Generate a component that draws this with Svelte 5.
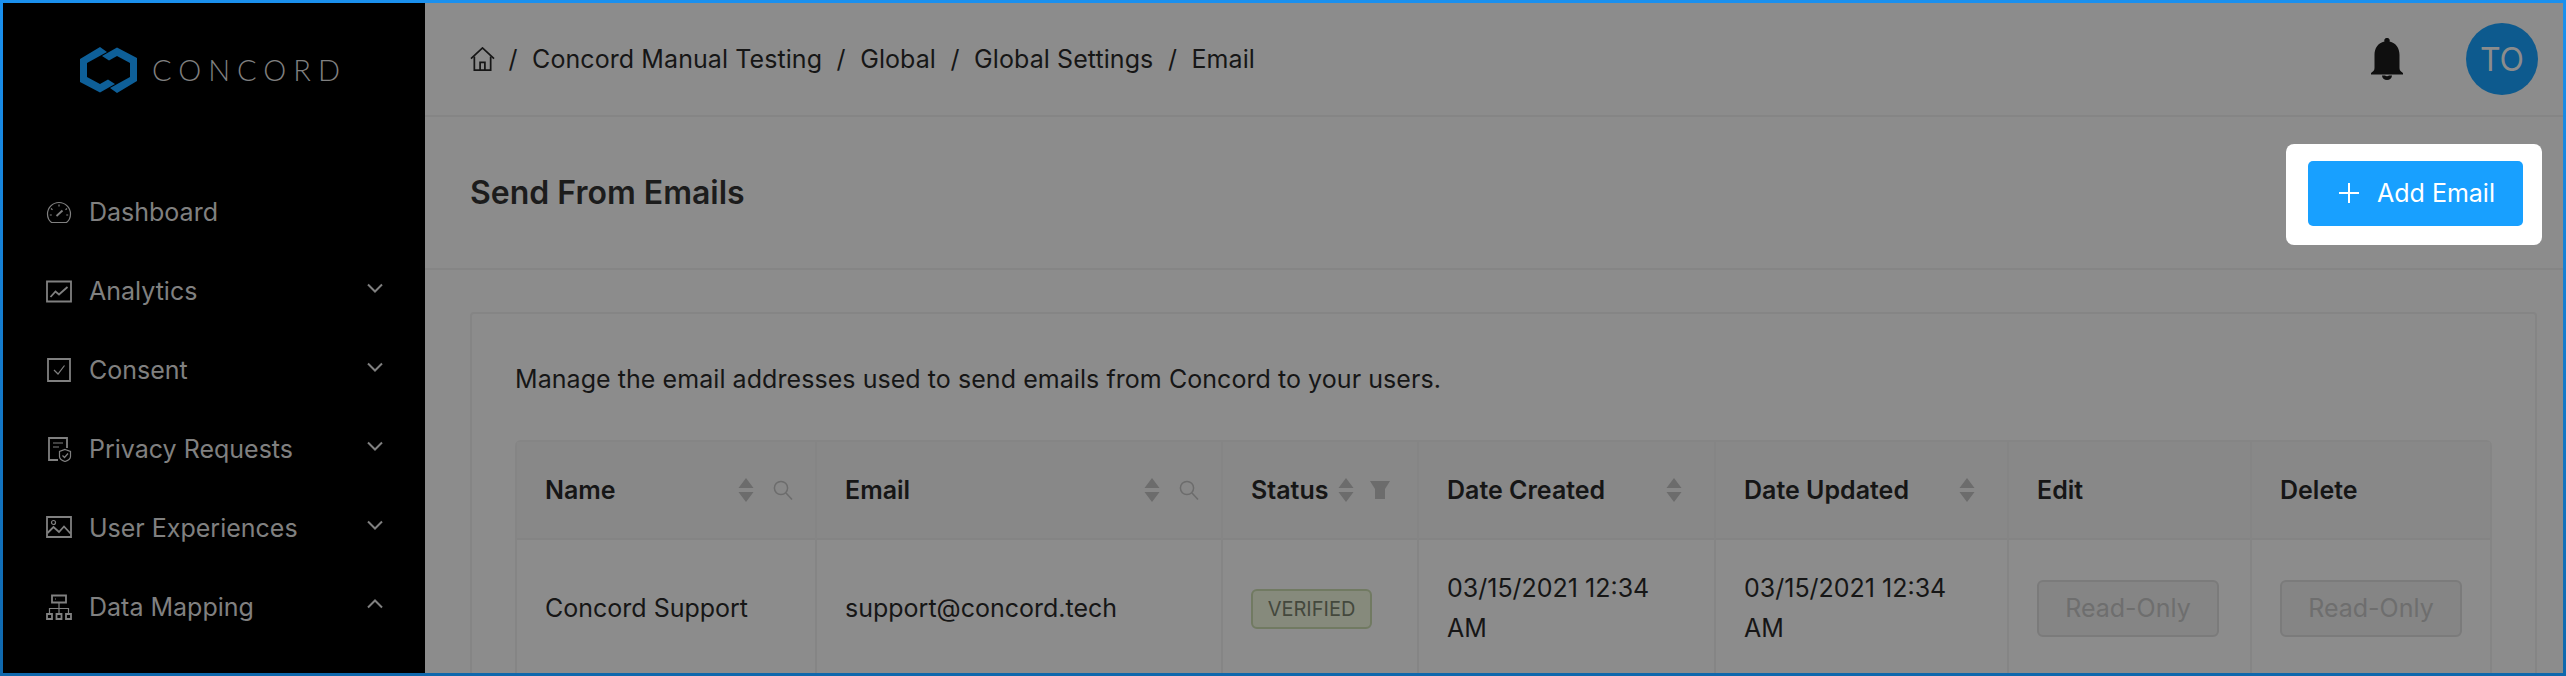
<script>
  const nav = [
    { label: 'Dashboard', icon: 'gauge', chevron: '' },
    { label: 'Analytics', icon: 'chart', chevron: 'down' },
    { label: 'Consent', icon: 'check', chevron: 'down' },
    { label: 'Privacy Requests', icon: 'doc', chevron: 'down' },
    { label: 'User Experiences', icon: 'image', chevron: 'down' },
    { label: 'Data Mapping', icon: 'tree', chevron: 'up' }
  ];
  const crumbs = ['Concord Manual Testing', 'Global', 'Global Settings', 'Email'];
</script>

{#snippet sortIcon()}
  <svg class="sort" viewBox="0 0 16 24"><path d="M8 0 15.5 10H.5ZM8 24 .5 14h15Z" /></svg>
{/snippet}
{#snippet searchIcon()}
  <svg class="search" viewBox="0 0 20 20"><circle cx="8" cy="8" r="6.6" /><path d="m13 13 6 6.4" /></svg>
{/snippet}

<div class="frame">
  <aside class="sidebar">
    <div class="logo">
      <svg class="mark" viewBox="0 0 57 46">
        <path d="M20 0 0 12v23l20 10.500 15-8.500-7-4.500-8 4.500-13-7V16L27 5Z" />
        <path d="M37 46l20-12V11L37 .5 22 9l7 4.500 8-4.500 13 7v14L30 41Z" />
      </svg>
      <span class="wordmark">CONCORD</span>
    </div>
    <nav class="nav">
      {#each nav as item}
        <div class="nav-item">
          <svg class="nav-icon" viewBox="0 0 26 26">
            {#if item.icon === 'gauge'}
              <path d="M5.500 23.500C3 21.500 1.500 18.500 1.500 15a11.500 11.500 0 0 1 23 0c0 3.500-1.500 6.500-4 8.500Z" />
              <path d="m10.500 17 6-5.500" class="thick" />
              <path d="M13 5.500v2M5 9.500l1.500 1.200M21 9.500l-1.500 1.200M3.800 16h2M20.200 16h2" />
            {:else if item.icon === 'chart'}
              <path d="M1 3.500h24v20H1z" class="thick" />
              <path d="m4.500 19 5-5.500 3.500 3 8.500-7.500" class="thick" />
            {:else if item.icon === 'check'}
              <path d="M2 2h22v22H2z" class="thick" />
              <path d="m8 13 4 4 6.500-8.500" />
            {:else if item.icon === 'doc'}
              <path d="M12 24H3V2h18v10" class="thick" />
              <path d="M7 7h10M7 11h6" />
              <path d="M19 13.500l5.500 2v5c0 2.500-2.500 4-5.500 5-3-1-5.500-2.500-5.500-5v-5Z" />
              <path d="m16.500 19.500 2 2 3.500-4" />
            {:else if item.icon === 'image'}
              <path d="M1 2h24v20H1z" class="thick" />
              <circle cx="7.500" cy="7.500" r="2" />
              <path d="m1.500 18 6-6 5.500 5 5-5.500 6.500 7" class="thick" />
            {:else}
              <path d="M6 1.500h14v7H6z" class="thick" />
              <path d="M9 5h1M13 8.500v6M3.500 20v-5.500h19V20M13 14.500V20" />
              <path d="M1 20h5v5H1zM10.500 20h5v5h-5zM20 20h5v5h-5z" class="thick" />
            {/if}
          </svg>
          <span class="nav-label">{item.label}</span>
          {#if item.chevron}
            <svg class="chevron" class:up={item.chevron === 'up'} viewBox="0 0 16 10"><path d="m1 1.500 7 7 7-7" /></svg>
          {/if}
        </div>
      {/each}
    </nav>
  </aside>

  <main class="main">
    <header class="topbar">
      <div class="crumbs">
        <svg class="home" viewBox="0 0 26 25">
          <path d="M1 12 13 1l12 11" />
          <path d="M4.500 10v14h17V10" />
          <path d="M10.500 24v-8h5v8" />
        </svg>
        {#each crumbs as crumb}
          <span class="sep">/</span>
          <span>{crumb}</span>
        {/each}
      </div>
      <div class="top-actions">
        <svg class="bell" viewBox="0 0 32 42">
          <path d="M16 0a2.500 2.500 0 0 1 2.500 3.500C25 5 28.500 10 28.500 17v13c0 2 1 3.500 3.500 5v1.500H0V35c2.500-1.500 3.500-3 3.500-5V17C3.500 10 7 5 13.500 3.500A2.500 2.500 0 0 1 16 0Z" />
          <path d="M11 37.500h10a5 4.500 0 0 1-10 0Zm3 0a2.500 2 0 0 0 4 0Z" fill-rule="evenodd" />
        </svg>
        <div class="avatar">TO</div>
      </div>
    </header>

    <section class="titlebar">
      <h1>Send From Emails</h1>
      <div class="spotlight">
        <button class="add">
          <svg class="plus" viewBox="0 0 20 20"><path d="M10 0v20M0 10h20" /></svg>
          Add Email
        </button>
      </div>
    </section>

    <section class="content">
      <div class="card">
        <p class="intro">Manage the email addresses used to send emails from Concord to your users.</p>
        <table>
          <colgroup>
            <col class="c1" /><col class="c2" /><col class="c3" /><col class="c4" /><col class="c5" /><col class="c6" /><col class="c7" />
          </colgroup>
          <thead>
            <tr>
              <th><div class="th name"><span>Name</span>{@render sortIcon()}{@render searchIcon()}</div></th>
              <th><div class="th name"><span>Email</span>{@render sortIcon()}{@render searchIcon()}</div></th>
              <th>
                <div class="th status">
                  <span>Status</span>{@render sortIcon()}
                  <svg class="filter" viewBox="0 0 20 18"><path d="M0 0h20l-5 8v10H5V8Z" /></svg>
                </div>
              </th>
              <th><div class="th date"><span>Date Created</span>{@render sortIcon()}</div></th>
              <th><div class="th date"><span>Date Updated</span>{@render sortIcon()}</div></th>
              <th>Edit</th>
              <th>Delete</th>
            </tr>
          </thead>
          <tbody>
            <tr>
              <td>Concord Support</td>
              <td>support@concord.tech</td>
              <td><span class="tag">VERIFIED</span></td>
              <td class="wrap">03/15/2021 12:34 AM</td>
              <td class="wrap">03/15/2021 12:34 AM</td>
              <td><span class="readonly">Read-Only</span></td>
              <td><span class="readonly">Read-Only</span></td>
            </tr>
          </tbody>
        </table>
      </div>
    </section>
  </main>
</div>

<style>
  :global(body) { margin: 0; background: #8c8c8c; }
  .frame {
    box-sizing: border-box;
    width: 2566px;
    height: 676px;
    display: flex;
    overflow: hidden;
    border: 3px solid #1588e8;
    border-image: linear-gradient(to bottom, #1a90ee, #0f68ad) 1;
    font-family: Inter, "Liberation Sans", sans-serif;
    font-size: 25px;
    color: #161616;
    background: #8c8c8c;
  }
  .sidebar { flex: 0 0 422px; background: #000; }
  .logo { display: flex; align-items: center; height: 95px; padding: 0 0 0 77px; margin-top: 19px; gap: 15px; }
  .mark { width: 57px; height: 46px; fill: #0e5f98; }
  .wordmark { font-family: Lato, sans-serif; font-weight: 300; font-size: 29px; letter-spacing: 7px; color: #808080; }
  .nav { margin-top: 55px; }
  .nav-item { display: flex; align-items: center; height: 79px; padding-left: 43px; color: #808080; }
  .nav-icon { width: 26px; height: 26px; fill: none; stroke: #808080; stroke-width: 1.200; margin-right: 17px; }
  .nav-icon .thick { stroke-width: 1.800; }
  .nav-label { flex: 1; }
  .chevron { width: 16px; height: 10px; margin-right: 42px; fill: none; stroke: #808080; stroke-width: 2; margin-top: -6px; }
  .chevron.up { transform: rotate(180deg); }

  .main { flex: 1; min-width: 0; display: flex; flex-direction: column; }
  .topbar {
    box-sizing: border-box;
    flex: 0 0 114px;
    display: flex;
    align-items: center;
    justify-content: space-between;
    padding: 0 25px 0 45px;
    border-bottom: 2px solid #858585;
  }
  .crumbs { display: flex; align-items: center; gap: 0; letter-spacing: .08px; }
  .crumbs span { white-space: nowrap; }
  .sep { margin: 0 14.500px; }
  .home { width: 25px; height: 24px; fill: none; stroke: #161616; stroke-width: 1.800; margin-right: -1px; }
  .top-actions { display: flex; align-items: center; gap: 63px; }
  .bell { width: 32px; height: 42px; fill: #0f0f0f; }
  .avatar {
    width: 72px;
    height: 72px;
    border-radius: 50%;
    background: #0d5a8e;
    color: #8c8c8c;
    font-size: 32px;
    display: flex;
    align-items: center;
    justify-content: center;
  }
  .titlebar {
    box-sizing: border-box;
    flex: 0 0 153px;
    display: flex;
    align-items: center;
    justify-content: space-between;
    padding: 3px 21px 0 45px;
    border-bottom: 2px solid #858585;
  }
  h1 { margin: -3px 0 0; font-size: 32px; font-weight: 600; color: #1c1c1c; }
  .spotlight { background: #fff; border-radius: 8px; padding: 17px 19px 19px 22px; }
  .add {
    display: flex;
    align-items: center;
    width: 215px;
    height: 65px;
    padding: 0 0 0 31px;
    box-sizing: border-box;
    border: 0;
    border-radius: 5px;
    background: #18a0ff;
    color: #fff;
    font: inherit;
  }
  .plus { width: 20px; height: 20px; fill: none; stroke: #fff; stroke-width: 2; margin-right: 18px; }

  .content { flex: 1; min-height: 0; padding: 42px 26px 0 45px; overflow: hidden; }
  .card {
    box-sizing: border-box;
    height: 400px;
    padding: 45px 44px 0 43px;
    border: 2px solid #858585;
    border-radius: 4px;
  }
  .intro { margin: 0 0 41px; line-height: 40px; letter-spacing: .06px; }
  table { width: 1977px; table-layout: fixed; border-collapse: separate; border-spacing: 0; border: 2px solid #858585; border-bottom: 0; border-radius: 6px 6px 0 0; }
  .c1 { width: 298px; } .c2 { width: 406px; } .c3 { width: 196px; } .c4 { width: 297px; }
  .c5 { width: 293px; } .c6 { width: 243px; } .c7 { width: 240px; }
  th, td { box-sizing: border-box; padding: 0 0 0 28px; text-align: left; border-left: 2px solid #858585; }
  th:first-child, td:first-child { border-left: 0; }
  th { height: 98px; background: #888888; font-weight: 600; border-bottom: 2px solid #848484; }
  td { height: 136px; line-height: 40px; }
  td.wrap { padding-right: 30px; }
  .th { display: flex; align-items: center; }
  .sort { flex: none; width: 16px; height: 24px; fill: #6c6c6c; }
  .search { flex: none; width: 20px; height: 20px; fill: none; stroke: #6c6c6c; stroke-width: 1.500; margin: 0 22px 0 19px; }
  .name .sort, .date .sort { margin-left: auto; }
  .date .sort { margin-right: 32px; }
  .status .sort { margin-left: 10px; }
  .filter { width: 20px; height: 18px; fill: #6c6c6c; margin-left: 16px; }
  .tag {
    display: inline-flex;
    align-items: center;
    justify-content: center;
    box-sizing: border-box;
    width: 121px;
    height: 40px;
    border: 2px solid #717a62;
    border-radius: 6px;
    background: #868a7c;
    color: #44483d;
    font-size: 20px;
  }
  .readonly {
    display: flex;
    align-items: center;
    justify-content: center;
    box-sizing: border-box;
    width: 182px;
    height: 57px;
    border: 2px solid #7b7b7b;
    border-radius: 6px;
    background: #858585;
    color: #6e6e6e;
  }
</style>
